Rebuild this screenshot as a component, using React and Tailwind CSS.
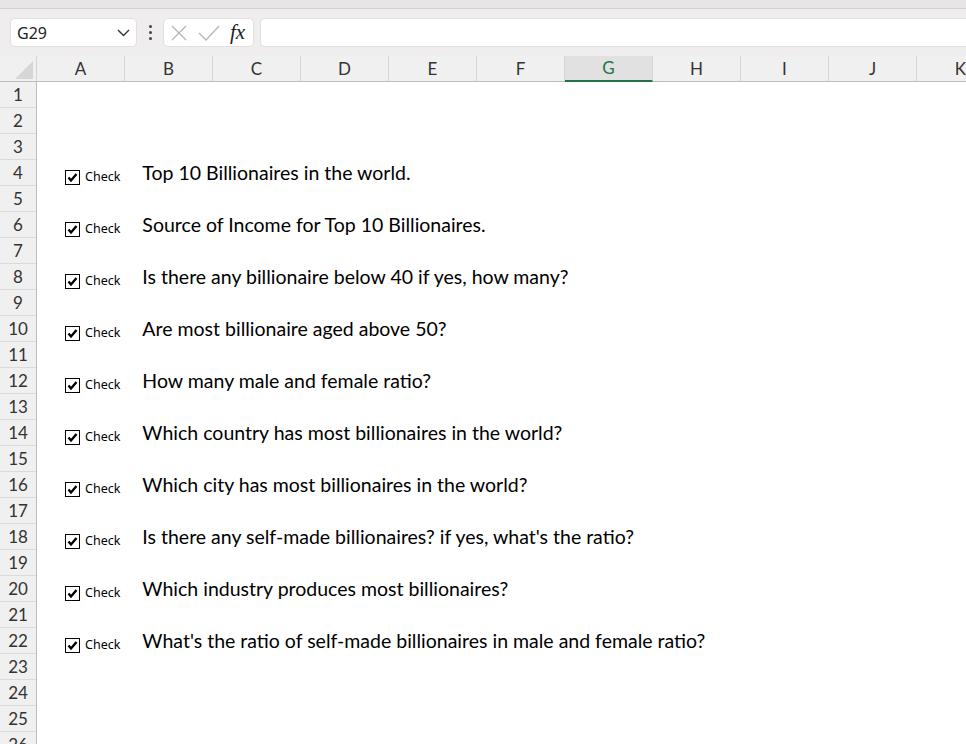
import React from "react";

const columns = ["A", "B", "C", "D", "E", "F", "G", "H", "I", "J", "K"];

const questions = {
  4: "Top 10 Billionaires in the world.",
  6: "Source of Income for Top 10 Billionaires.",
  8: "Is there any billionaire below 40 if yes, how many?",
  10: "Are most billionaire aged above 50?",
  12: "How many male and female ratio?",
  14: "Which country has most billionaires in the world?",
  16: "Which city has most billionaires in the world?",
  18: "Is there any self-made billionaires? if yes, what's the ratio?",
  20: "Which industry produces most billionaires?",
  22: "What's the ratio of self-made billionaires in male and female ratio?",
};

const rows = Array.from({ length: 26 }, (_, i) => i + 1);

const CheckBox = () => (
  <div className="w-[15px] h-[15px] border border-black bg-white flex items-center justify-center">
    <svg width="11" height="11" viewBox="0 0 11 11">
      <path d="M1.5 5.5 L4 8.5 L9.5 2" fill="none" stroke="black" strokeWidth="2.4" />
    </svg>
  </div>
);

const FormulaBar = () => (
  <div className="h-[47px] bg-[#efeded] pt-[9px] flex items-start font-['Noto_Sans',sans-serif]">
    <div className="ml-[10px] w-[127px] h-[29px] bg-white rounded-[5px] border border-[#e2dfdf] flex items-center pl-[6px] pr-[6px]">
      <span className="text-[16px] text-[#222] flex-1">G29</span>
      <svg width="13" height="8" viewBox="0 0 13 8">
        <path d="M1 1 L6.5 6.5 L12 1" fill="none" stroke="#333" strokeWidth="1.4" />
      </svg>
    </div>
    <div className="w-[26px] h-[29px] flex flex-col items-center justify-center gap-[3px]">
      <span className="w-[3px] h-[3px] bg-[#444] rounded-full" />
      <span className="w-[3px] h-[3px] bg-[#444] rounded-full" />
      <span className="w-[3px] h-[3px] bg-[#444] rounded-full" />
    </div>
    <div className="w-[91px] h-[29px] bg-white rounded-[5px] border border-[#e2dfdf] flex items-center pl-[6px]">
      <svg width="18" height="18" viewBox="0 0 18 18">
        <path d="M2 2 L16 16 M16 2 L2 16" stroke="#b5b5b5" strokeWidth="1.3" />
      </svg>
      <svg width="22" height="18" viewBox="0 0 22 18" className="ml-[10px]">
        <path d="M1 9 L8 16 L21 2" fill="none" stroke="#b5b5b5" strokeWidth="1.3" />
      </svg>
      <span className="ml-[10px] text-[21px] italic text-[#222] font-['Liberation_Serif',serif] leading-none">fx</span>
    </div>
    <div className="ml-[6px] flex-1 h-[29px] bg-white rounded-l-[5px] border border-r-0 border-[#e2dfdf]" />
  </div>
);

const Header = () => (
  <div className="flex h-[26px] bg-[#f0f0f0] border-b border-[#bdbdbd] font-['Lato',sans-serif]">
    <div className="w-[37px] shrink-0 border-r border-[#d4d4d4] relative">
      <svg width="18" height="18" viewBox="0 0 18 18" className="absolute right-[3px] bottom-[2px]">
        <path d="M18 0 L18 18 L0 18 Z" fill="#d6d6d6" />
      </svg>
    </div>
    {columns.map((c) => (
      <div
        key={c}
        className={
          c === "G"
            ? "w-[88px] shrink-0 border-r border-[#d4d4d4] bg-[#e1e1e1] border-b-2 border-b-[#217346] -mb-px text-[#217346] flex items-center justify-center text-[17px]"
            : "w-[88px] shrink-0 border-r border-[#d4d4d4] text-[#333] flex items-center justify-center text-[17px]"
        }
      >
        {c}
      </div>
    ))}
  </div>
);

export default function App() {
  return (
    <div className="w-[966px] h-[744px] overflow-hidden bg-white">
      <div className="h-[9px] bg-[#e8e5e7] border-b border-[#d3d0d2]" />
      <FormulaBar />
      <Header />
      <div className="flex">
        <div className="w-[37px] shrink-0 bg-[#f0f0f0] border-r border-[#bdbdbd] font-['Lato',sans-serif]">
          {rows.map((r) => (
            <div
              key={r}
              className="h-[26px] border-b border-[#dadada] flex items-center justify-center text-[17px] text-[#333]"
            >
              {r}
            </div>
          ))}
        </div>
        <div className="flex-1">
          {rows.map((r) => (
            <div key={r} className="h-[26px] flex items-center">
              {questions[r] && (
                <>
                  <div className="ml-[28px] mt-[9px] flex items-center">
                    <CheckBox />
                    <span className="ml-[5px] text-[12.5px] text-black font-['Noto_Sans',sans-serif]">Check</span>
                  </div>
                  <span className="ml-[22px] text-[19.5px] text-black font-['Lato',sans-serif] whitespace-nowrap">
                    {questions[r]}
                  </span>
                </>
              )}
            </div>
          ))}
        </div>
      </div>
    </div>
  );
}
